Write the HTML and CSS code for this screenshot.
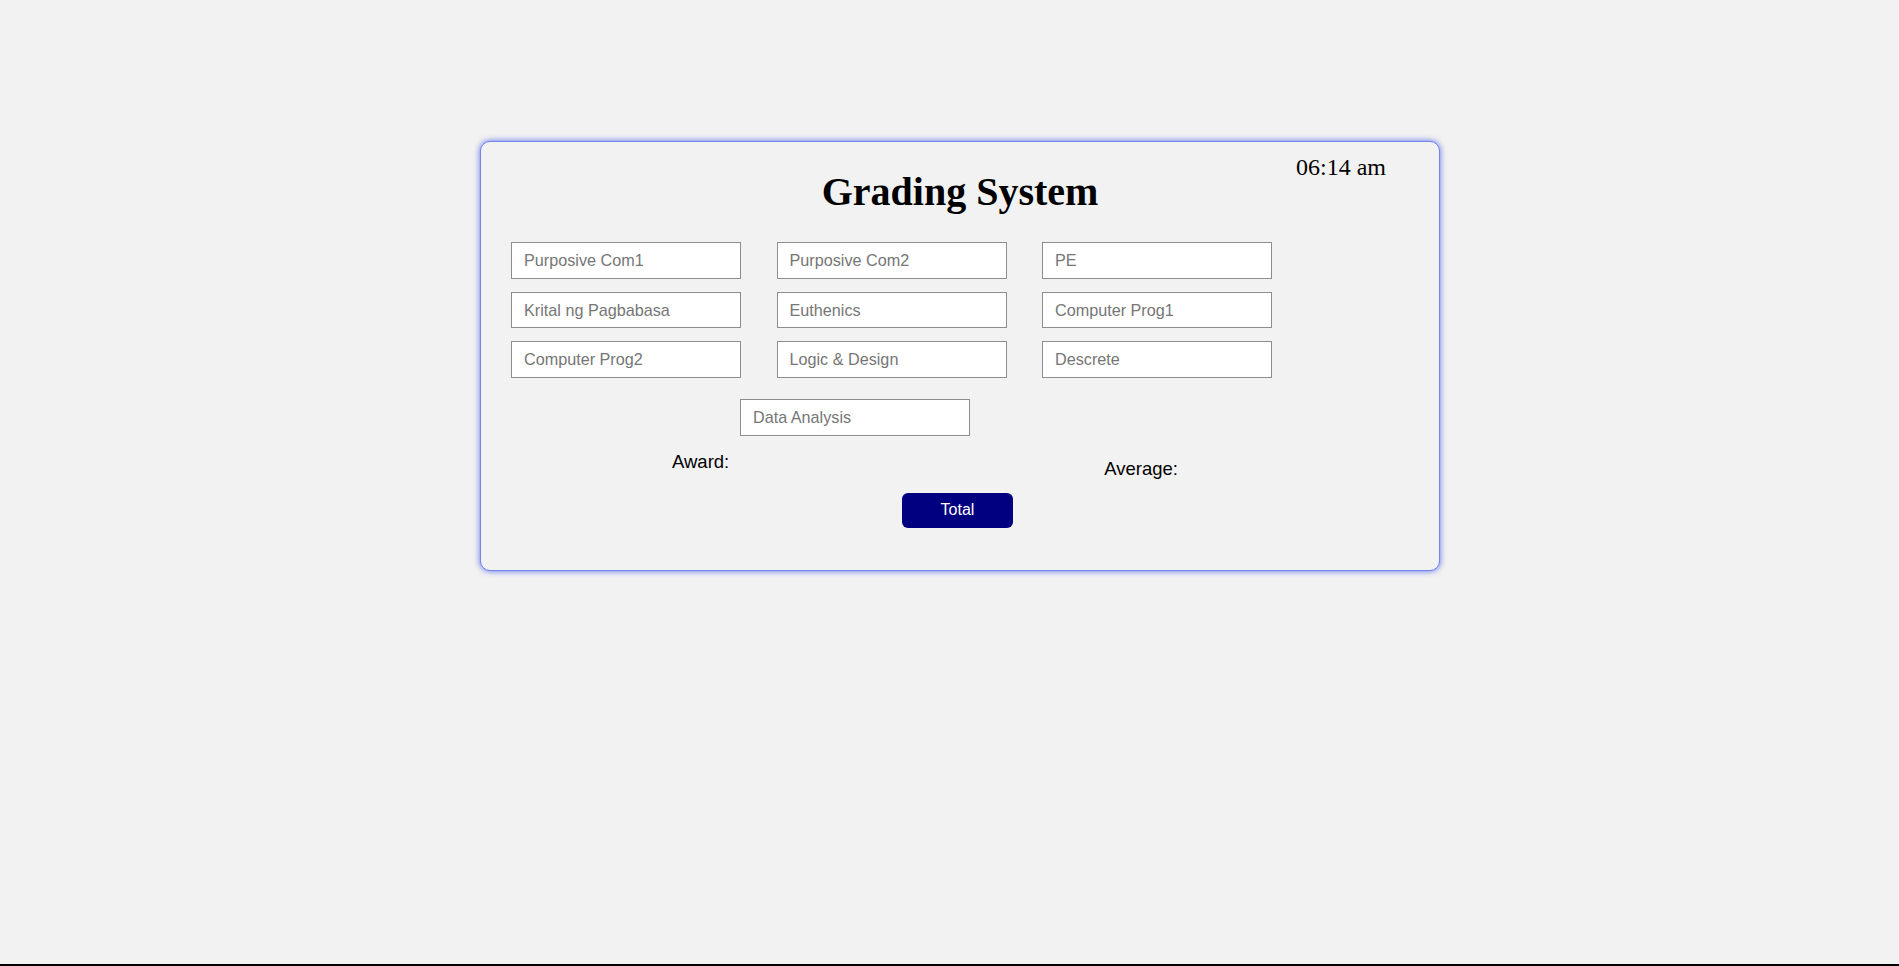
FILE: index.html
```html
<!DOCTYPE html>
<html lang="en">
<head>
<meta charset="utf-8">
<title>Grading System</title>
<link rel="stylesheet" href="styles.css">
</head>
<body>
  <main class="card">
    <div class="clock">06:14 am</div>
    <h1 class="title">Grading System</h1>
    <div class="grid">
      <input class="field" type="text" placeholder="Purposive Com1">
      <input class="field" type="text" placeholder="Purposive Com2">
      <input class="field" type="text" placeholder="PE">
      <input class="field" type="text" placeholder="Krital ng Pagbabasa">
      <input class="field" type="text" placeholder="Euthenics">
      <input class="field" type="text" placeholder="Computer Prog1">
      <input class="field" type="text" placeholder="Computer Prog2">
      <input class="field" type="text" placeholder="Logic &amp; Design">
      <input class="field" type="text" placeholder="Descrete">
    </div>
    <input class="field field-extra" type="text" placeholder="Data Analysis">
    <div class="results">
      <span class="label label-award">Award:</span>
      <span class="label label-average">Average:</span>
    </div>
    <button class="total" type="button">Total</button>
  </main>
</body>
</html>
```
FILE: styles.css
```css
html, body {
  margin: 0;
  background: #f2f2f2;
}
body {
  padding-top: 141px;
  min-height: 100vh;
  box-sizing: border-box;
  border-bottom: 2px solid #000;
  font-family: "Liberation Sans", Arial, sans-serif;
}
.card {
  position: relative;
  width: 960px;
  height: 430px;
  box-sizing: border-box;
  margin: 0 0 0 480px;
  padding: 30px 30px 0 30px;
  background: #f2f2f2;
  border: 1px solid #7385ec;
  border-radius: 10px;
  box-shadow: 0 0 6px rgba(80, 100, 235, 0.95);
}
.clock {
  position: absolute;
  top: 13px;
  right: 53px;
  font-family: "Liberation Serif", "Times New Roman", serif;
  font-size: 24px;
  line-height: 24px;
  color: #000;
}
.title {
  margin: 0;
  font-family: "Liberation Serif", "Times New Roman", serif;
  font-size: 40px;
  line-height: 40px;
  font-weight: bold;
  text-align: center;
  color: #000;
}
.grid {
  display: grid;
  grid-template-columns: repeat(3, 230px);
  column-gap: 35.5px;
  row-gap: 13px;
  margin-top: 30px;
}
.field {
  display: block;
  width: 230px;
  height: 36.5px;
  box-sizing: border-box;
  margin: 0;
  padding: 1px 12px 0 12px;
  border: 1px solid #8d8d8d;
  border-radius: 0;
  background: #fff;
  font-family: "Liberation Sans", Arial, sans-serif;
  font-size: 16.2px;
  color: #000;
  outline: none;
}
.field::placeholder {
  color: #767676;
}
.field-extra {
  margin-top: 21.5px;
  margin-left: 229px;
}
.results {
  display: flex;
  align-items: flex-start;
  height: 42px;
  margin-top: 15px;
}
.label {
  font-size: 18.5px;
  line-height: 21px;
  color: #000;
}
.label-award {
  margin-left: 161px;
}
.label-average {
  margin-left: 375px;
  margin-top: 7.5px;
}
.total {
  display: block;
  width: 111px;
  height: 35px;
  margin: 0 0 0 391px;
  padding: 0;
  border: none;
  border-radius: 6px;
  background: #000080;
  color: #fff;
  font-family: "Liberation Sans", Arial, sans-serif;
  font-size: 16px;
  cursor: pointer;
}
```
